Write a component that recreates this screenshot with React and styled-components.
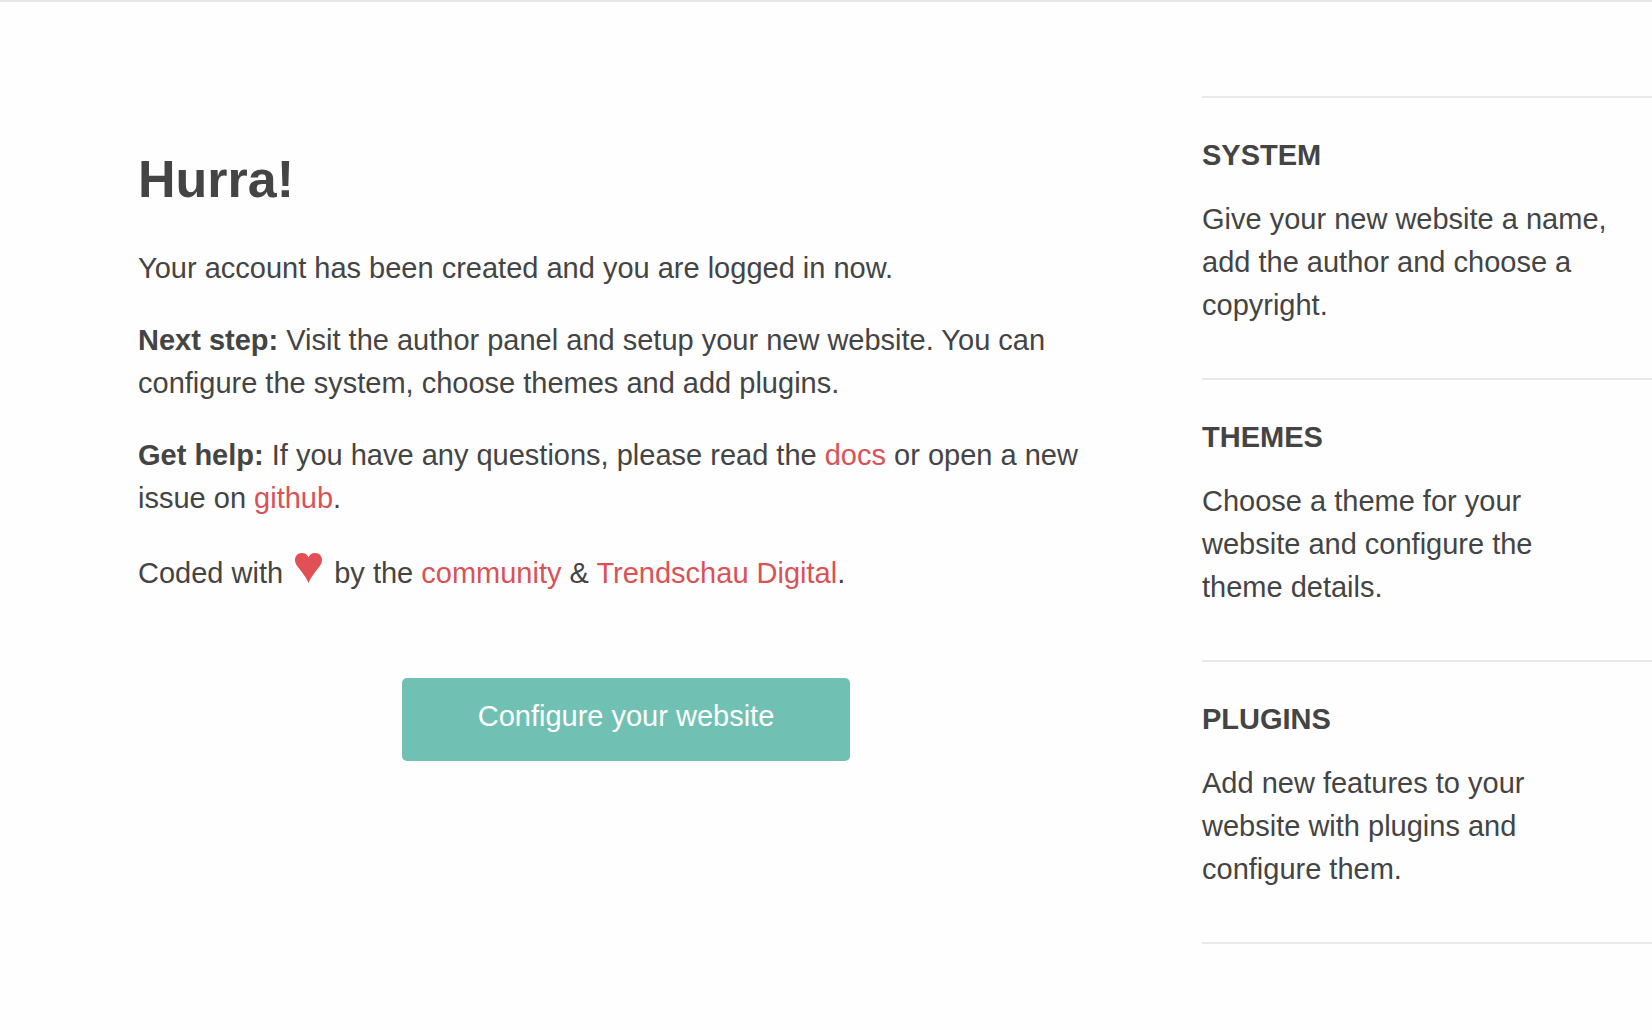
import styled, { createGlobalStyle } from "styled-components";

const GlobalStyle = createGlobalStyle`
  * {
    box-sizing: border-box;
  }

  body {
    margin: 0;
    background: #fefefe;
    color: #444;
    font-family: "Liberation Sans", Helvetica, Arial, sans-serif;
    font-size: 29px;
    line-height: 43px;
  }
`;

const Page = styled.div`
  border-top: 2px solid #e6e6e4;
  padding: 94px 0 84px 138px;
  display: grid;
  grid-template-columns: 976fr 450fr;
  column-gap: 88px;

  @media (max-width: 900px) {
    grid-template-columns: 1fr;
    padding-left: 40px;
  }
`;

const Content = styled.main`
  padding-top: 51px;
`;

const Title = styled.h1`
  margin: 0 0 36px;
  font-size: 52px;
  line-height: 64px;
`;

const Text = styled.p`
  margin: 0 0 29px;
`;

const Link = styled.a`
  color: #d95256;
  text-decoration: none;

  &:hover {
    text-decoration: underline;
  }
`;

const Heart = styled.svg`
  width: 27px;
  height: 30px;
  margin: 4px 4px 0;
  fill: #e05055;
`;

const ButtonRow = styled.div`
  display: flex;
  justify-content: center;
  margin-top: 83px;
`;

const Button = styled.button`
  width: 448px;
  max-width: 100%;
  padding: 17px 20px 23px;
  border: 0;
  border-radius: 5px;
  background: #70c1b3;
  color: #fff;
  font: inherit;
  cursor: pointer;
`;

const Sidebar = styled.aside`
  border-bottom: 2px solid #e9e9e8;
`;

const Card = styled.section`
  border-top: 2px solid #e9e9e8;
  padding: 36px 40px 51px 0;
`;

const CardTitle = styled.h2`
  margin: 0 0 21px;
  font-size: 29px;
  line-height: 43px;
  text-transform: uppercase;
`;

const CardText = styled.p`
  margin: 0;
`;

const cards = [
  {
    title: "System",
    text: "Give your new website a name, add the author and choose a copyright.",
  },
  {
    title: "Themes",
    text: "Choose a theme for your website and configure the theme details.",
  },
  {
    title: "Plugins",
    text: "Add new features to your website with plugins and configure them.",
  },
];

const App = () => {
  return (
    <>
      <GlobalStyle />
      <Page>
        <Content>
          <Title>Hurra!</Title>
          <Text>Your account has been created and you are logged in now.</Text>
          <Text>
            <strong>Next step:</strong> Visit the author panel and setup your
            new website. You can configure the system, choose themes and add
            plugins.
          </Text>
          <Text>
            <strong>Get help:</strong> If you have any questions, please read
            the <Link href="#docs">docs</Link> or open a new issue on{" "}
            <Link href="#github">github</Link>.
          </Text>
          <Text>
            Coded with{" "}
            <Heart viewBox="0 0 27 30" aria-hidden="true">
              <path d="M13.5 30C12 26.2 9.5 22.6 6 18C2.4 13.4 0 10.8 0 7C0 2.8 2.8 0 6.8 0C10 0 12.4 1.5 13.5 4.2C14.6 1.5 17 0 20.2 0C24.2 0 27 2.8 27 7C27 10.8 24.6 13.4 21 18C17.5 22.6 15 26.2 13.5 30Z" />
            </Heart>{" "}
            by the <Link href="#community">community</Link> &amp;{" "}
            <Link href="#trendschau">Trendschau Digital</Link>.
          </Text>
          <ButtonRow>
            <Button type="button">Configure your website</Button>
          </ButtonRow>
        </Content>
        <Sidebar>
          {cards.map((card) => (
            <Card key={card.title}>
              <CardTitle>{card.title}</CardTitle>
              <CardText>{card.text}</CardText>
            </Card>
          ))}
        </Sidebar>
      </Page>
    </>
  );
};

export default App;
